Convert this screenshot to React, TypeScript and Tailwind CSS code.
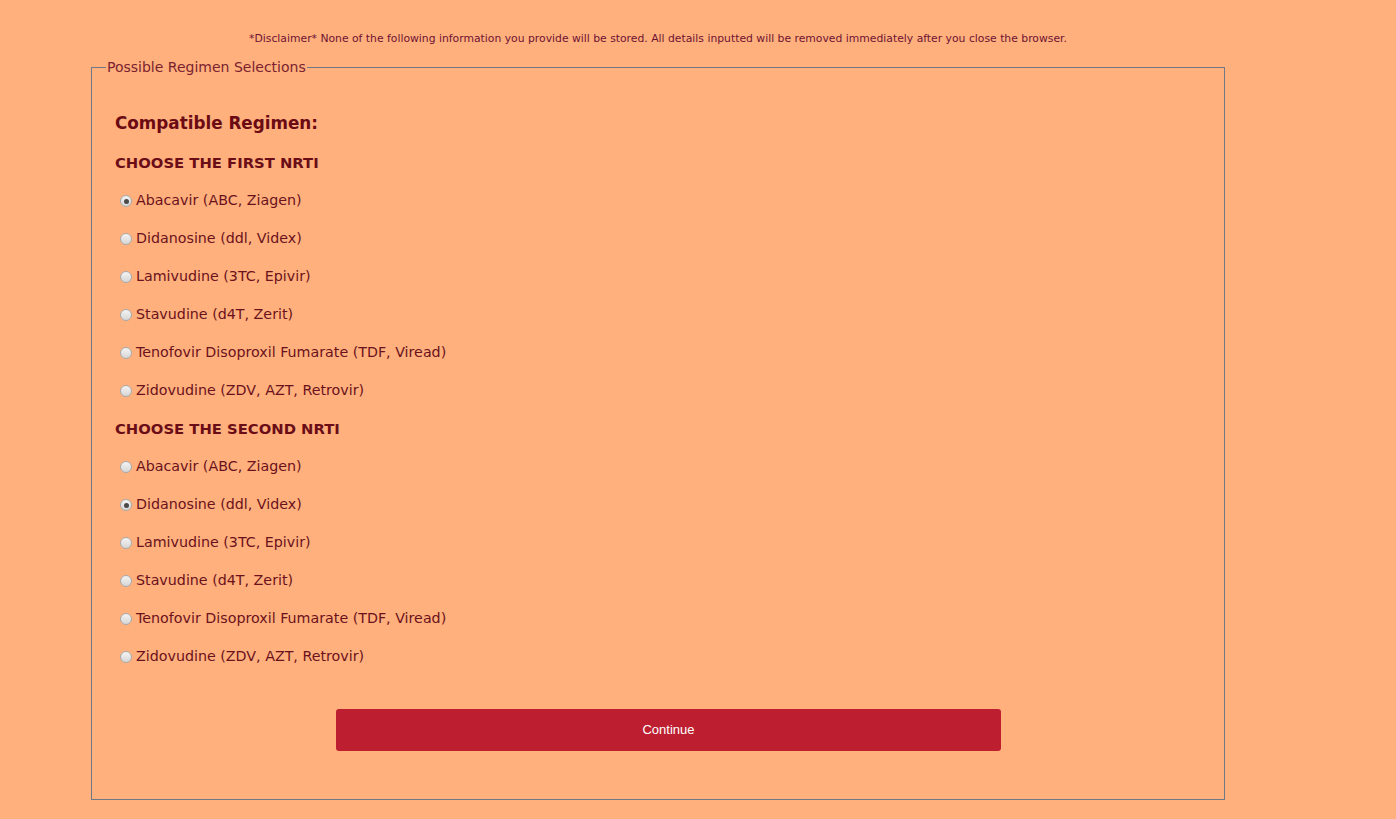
import React from "react";

const first = [
  "Abacavir (ABC, Ziagen)",
  "Didanosine (ddl, Videx)",
  "Lamivudine (3TC, Epivir)",
  "Stavudine (d4T, Zerit)",
  "Tenofovir Disoproxil Fumarate (TDF, Viread)",
  "Zidovudine (ZDV, AZT, Retrovir)",
];

function Radio({ checked }: { checked: boolean }) {
  return (
    <span className="relative inline-flex h-[12px] w-[12px] shrink-0 items-center justify-center rounded-full border border-[#a9a9a9] bg-gradient-to-b from-[#f4f4f4] to-[#d6d6d6]">
      {checked && <span className="h-[5px] w-[5px] rounded-full bg-[#4a4a4a]" />}
    </span>
  );
}

function Group({ title, name, selected }: { title: string; name: string; selected: number }) {
  return (
    <div>
      <div className="flex h-[38px] items-center text-[14.8px] font-bold text-[#6b0d17]">{title}</div>
      {first.map((d, i) => (
        <label key={name + i} className="flex h-[38px] items-center">
          <span className="ml-[5px] mr-[4px] flex items-center">
            <Radio checked={i === selected} />
          </span>
          <span className="text-[14.25px] text-[#6b111c]">{d}</span>
        </label>
      ))}
    </div>
  );
}

export default function App() {
  return (
    <div
      className="min-h-screen w-full bg-[#ffb07d]"
      style={{ fontFamily: '"DejaVu Sans", Verdana, sans-serif' }}
    >
      <div className="h-[31px]" />
      <div className="ml-[91px] w-[1134px] text-center text-[10.8px] leading-[16px] text-[#6e1233]">
        *Disclaimer* None of the following information you provide will be stored. All details inputted will be removed immediately after you close the browser.
      </div>
      <fieldset className="ml-[91px] mt-[10px] w-[1134px] border border-[#6f7986] pb-[48px] pl-[14px] pr-[23px]">
        <legend className="px-[1px] text-[14px] leading-[20px] text-[#7a2230]">Possible Regimen Selections</legend>
        <div className="pl-[9px] pt-[26px]">
          <div className="flex h-[41px] items-center text-[16.8px] font-bold text-[#6b0a13]">Compatible Regimen:</div>
          <Group title="CHOOSE THE FIRST NRTI" name="a" selected={0} />
          <Group title="CHOOSE THE SECOND NRTI" name="b" selected={1} />
          <div className="mt-[33px] pl-[221px]">
            <button
              className="flex h-[42px] w-[665px] items-center justify-center rounded-[3px] bg-[#bd1f31] text-[13px] text-white"
              style={{ fontFamily: '"Liberation Sans", Arial, sans-serif' }}
            >
              Continue
            </button>
          </div>
        </div>
      </fieldset>
    </div>
  );
}
